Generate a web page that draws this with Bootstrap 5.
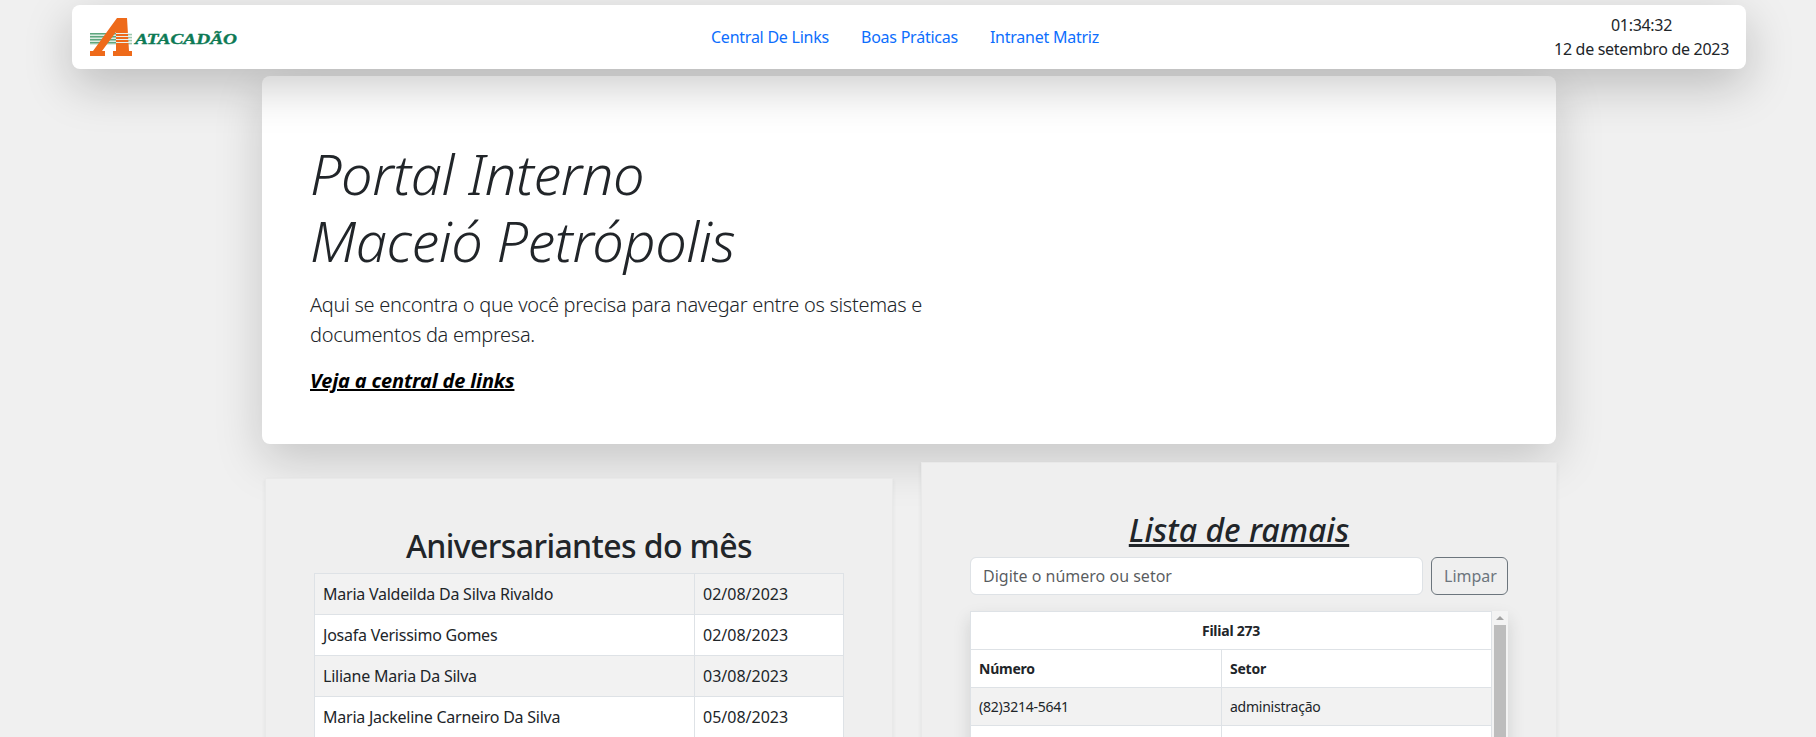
<!DOCTYPE html>
<html lang="pt-BR">
<head>
    <meta charset="UTF-8">
    <meta name="viewport" content="width=device-width, initial-scale=1.0">
    <title>Portal Interno</title>
    <link href="https://cdn.jsdelivr.net/npm/bootstrap@5.3.0/dist/css/bootstrap.min.css" rel="stylesheet">
    <style>
        body {
            background: #f0f0f0;
            font-family: "Noto Sans", "Open Sans", sans-serif;
            letter-spacing: -.24px;
            padding-top: 5px;
        }
        .top-bar {
            width: 1674px;
            height: 64px;
            margin-left: 72px;
            padding: 0 17px 0 18px;
            border-radius: 8px;
            z-index: 10;
            box-shadow: 0 16px 48px rgba(0, 0, 0, .22);
        }
        .logo-box { width: 166px; }
        .brand-name {
            font: italic 700 15px "Liberation Serif", serif;
            fill: #0d7a55;
            stroke: #0d7a55;
            stroke-width: .35px;
            letter-spacing: 0;
        }
        .clock-box { letter-spacing: -.3px; }
        .page-wrap { width: 1294px; margin: 7px 0 0 262px; }
        .hero-box {
            padding: 64px 48px 48px;
            height: 368px;
            box-shadow: 0 16px 48px rgba(0, 0, 0, .175);
        }
        .hero-title { font-style: italic; line-height: 67.2px; letter-spacing: -.45px; margin-bottom: 16px; }
        .hero-lead { letter-spacing: -.3px; }
        .hero-link { font-size: 20px; line-height: 30px; color: #000; letter-spacing: -.15px; }
        .side-box {
            background: #efefef;
            padding: 48px;
            border: 1px solid #e9e9e9;
        }
        .side-left { width: 628px; margin: 34px 0 0 3px; }
        .side-right { width: 636px; margin: 18px -1px 0 auto; }
        .box-title { font-size: 32px; font-weight: 500; letter-spacing: -.6px; }
        .box-title.fst-italic { letter-spacing: 0; }
        .white-table { --bs-table-bg: #fff; }
        .date-cell { width: 149px; letter-spacing: 0; }
        .search-input { height: 38px; }
        .clear-btn { width: 77px; }
        .ramais-wrap {
            height: 190px;
            margin-top: 16px;
        }
        .ramais-wrap table { font-size: 14px; }
        .col-number { width: 251px; }
        .fake-scroll {
            width: 16px;
            background: #f3f3f3;
            padding: 5px 2px 0 2px;
        }
        .scroll-arrow {
            width: 0;
            margin: 0 auto 5px;
            border: 4px solid transparent;
            border-top: 0;
            border-bottom: 4px solid #a3a3a3;
        }
        .scroll-thumb { background: #bdbdbd; }
    </style>
</head>
<body>

    <nav class="top-bar position-relative bg-white d-flex align-items-center justify-content-between">
        <a href="#" class="d-block logo-box">
            <svg width="148" height="38" viewBox="0 0 148 38" class="d-block">
                <rect x="0" y="15" width="42" height="12" fill="#dcece2"/>
                <g fill="#5fa67f">
                    <rect x="0" y="15" width="42" height="1.5"/>
                    <rect x="0" y="18" width="42" height="1.5"/>
                    <rect x="0" y="21" width="42" height="1.5"/>
                    <rect x="0" y="24" width="42" height="1.5"/>
                </g>
                <polygon points="0,38 0,33 3,33 27,0 37,0 39,33 42,33 42,38 23,38 23,33 26,33 26,14 12,33 15,33 15,38" fill="#ee6a1a"/>
                <g fill="#e8f2ec">
                    <rect x="26" y="15" width="16" height="1"/>
                    <rect x="26" y="18" width="16" height="1"/>
                    <rect x="26" y="21" width="16" height="1"/>
                    <rect x="26" y="24" width="16" height="1"/>
                </g>
                <text x="45" y="26" class="brand-name" textLength="102" lengthAdjust="spacingAndGlyphs">ATACADÃO</text>
            </svg>
        </a>
        <ul class="nav">
            <li class="nav-item"><a class="nav-link" href="#">Central De Links</a></li>
            <li class="nav-item"><a class="nav-link" href="#">Boas Práticas</a></li>
            <li class="nav-item"><a class="nav-link" href="#">Intranet Matriz</a></li>
        </ul>
        <div class="text-center clock-box">01:34:32<br>12 de setembro de 2023</div>
    </nav>

    <div class="page-wrap">
        <div class="hero-box bg-white rounded-3">
            <h1 class="display-4 hero-title">Portal Interno<br>Maceió Petrópolis</h1>
            <p class="lead hero-lead">Aqui se encontra o que você precisa para navegar entre os sistemas e<br>documentos da empresa.</p>
            <a href="#" class="hero-link fw-bold fst-italic">Veja a central de links</a>
        </div>

        <div class="d-flex align-items-start">
            <div class="side-box side-left shadow-sm">
                <h2 class="box-title text-center">Aniversariantes do mês</h2>
                <table class="table table-bordered table-striped white-table mb-0">
                    <tbody>
                        <tr><td>Maria Valdeilda Da Silva Rivaldo</td><td class="date-cell">02/08/2023</td></tr>
                        <tr><td>Josafa Verissimo Gomes</td><td class="date-cell">02/08/2023</td></tr>
                        <tr><td>Liliane Maria Da Silva</td><td class="date-cell">03/08/2023</td></tr>
                        <tr><td>Maria Jackeline Carneiro Da Silva</td><td class="date-cell">05/08/2023</td></tr>
                    </tbody>
                </table>
            </div>
            <div class="side-box side-right shadow-sm">
                <h2 class="box-title text-center fst-italic text-decoration-underline">Lista de ramais</h2>
                <div class="d-flex gap-2">
                    <input type="text" class="form-control search-input" placeholder="Digite o número ou setor">
                    <button class="btn btn-outline-secondary clear-btn flex-shrink-0">Limpar</button>
                </div>
                <div class="ramais-wrap d-flex bg-white shadow">
                    <div class="flex-grow-1">
                        <table class="table table-bordered table-striped white-table mb-0">
                            <thead>
                                <tr><th colspan="2" class="text-center">Filial 273</th></tr>
                                <tr><th class="col-number">Número</th><th>Setor</th></tr>
                            </thead>
                            <tbody>
                                <tr><td>(82)3214-5641</td><td>administração</td></tr>
                                <tr><td>&nbsp;</td><td>&nbsp;</td></tr>
                            </tbody>
                        </table>
                    </div>
                    <div class="fake-scroll d-flex flex-column flex-shrink-0">
                        <div class="scroll-arrow"></div>
                        <div class="scroll-thumb flex-grow-1"></div>
                    </div>
                </div>
            </div>
        </div>
    </div>

    <script src="https://cdn.jsdelivr.net/npm/bootstrap@5.3.0/dist/js/bootstrap.bundle.min.js"></script>
</body>
</html>
